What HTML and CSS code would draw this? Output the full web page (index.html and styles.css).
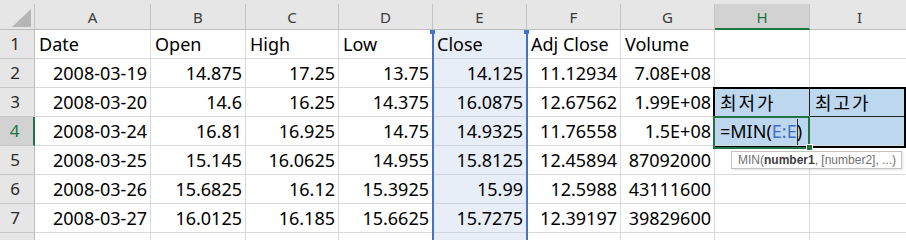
FILE: index.html
```html
<!DOCTYPE html>
<html lang="ko">
<head>
  <meta charset="UTF-8">
  <title>Sheet</title>
  <link rel="stylesheet" href="styles.css">
</head>
<body>
  <div class="wrap">
    <div class="strip"></div>
    <div class="sheet">
      <!-- column headers -->
      <div class="corner">
        <svg width="34" height="25" viewBox="0 0 34 25"><polygon points="31,5 31,23 12,23" fill="#b5b5b5"/></svg>
      </div>
      <div class="colhead">A</div>
      <div class="colhead">B</div>
      <div class="colhead">C</div>
      <div class="colhead">D</div>
      <div class="colhead">E</div>
      <div class="colhead">F</div>
      <div class="colhead">G</div>
      <div class="colhead active">H</div>
      <div class="colhead">I</div>

      <!-- row 1 -->
      <div class="rowhead">1</div>
      <div class="cell">Date</div>
      <div class="cell">Open</div>
      <div class="cell">High</div>
      <div class="cell">Low</div>
      <div class="cell ref">Close</div>
      <div class="cell">Adj Close</div>
      <div class="cell">Volume</div>
      <div class="cell"></div>
      <div class="cell"></div>

      <!-- row 2 -->
      <div class="rowhead">2</div>
      <div class="cell num">2008-03-19</div>
      <div class="cell num">14.875</div>
      <div class="cell num">17.25</div>
      <div class="cell num">13.75</div>
      <div class="cell num ref">14.125</div>
      <div class="cell num">11.12934</div>
      <div class="cell num">7.08E+08</div>
      <div class="cell"></div>
      <div class="cell"></div>

      <!-- row 3 -->
      <div class="rowhead">3</div>
      <div class="cell num">2008-03-20</div>
      <div class="cell num">14.6</div>
      <div class="cell num">16.25</div>
      <div class="cell num">14.375</div>
      <div class="cell num ref">16.0875</div>
      <div class="cell num">12.67562</div>
      <div class="cell num">1.99E+08</div>
      <div class="cell box box-tl ko">최저가</div>
      <div class="cell box box-tr ko">최고가</div>

      <!-- row 4 -->
      <div class="rowhead active">4</div>
      <div class="cell num">2008-03-24</div>
      <div class="cell num">16.81</div>
      <div class="cell num">16.925</div>
      <div class="cell num">14.75</div>
      <div class="cell num ref">14.9325</div>
      <div class="cell num">11.76558</div>
      <div class="cell num">1.5E+08</div>
      <div class="cell box editing">=MIN(<span class="refText">E:E</span><span class="caret"></span>)</div>
      <div class="cell box"></div>

      <!-- row 5 -->
      <div class="rowhead">5</div>
      <div class="cell num">2008-03-25</div>
      <div class="cell num">15.145</div>
      <div class="cell num">16.0625</div>
      <div class="cell num">14.955</div>
      <div class="cell num ref">15.8125</div>
      <div class="cell num">12.45894</div>
      <div class="cell num">87092000</div>
      <div class="cell"></div>
      <div class="cell"></div>

      <!-- row 6 -->
      <div class="rowhead">6</div>
      <div class="cell num">2008-03-26</div>
      <div class="cell num">15.6825</div>
      <div class="cell num">16.12</div>
      <div class="cell num">15.3925</div>
      <div class="cell num ref">15.99</div>
      <div class="cell num">12.5988</div>
      <div class="cell num">43111600</div>
      <div class="cell"></div>
      <div class="cell"></div>

      <!-- row 7 -->
      <div class="rowhead">7</div>
      <div class="cell num">2008-03-27</div>
      <div class="cell num">16.0125</div>
      <div class="cell num">16.185</div>
      <div class="cell num">15.6625</div>
      <div class="cell num ref">15.7275</div>
      <div class="cell num">12.39197</div>
      <div class="cell num">39829600</div>
      <div class="cell"></div>
      <div class="cell"></div>

      <!-- row 8, cut off by the window -->
      <div class="rowhead"></div>
      <div class="cell"></div>
      <div class="cell"></div>
      <div class="cell"></div>
      <div class="cell"></div>
      <div class="cell ref"></div>
      <div class="cell"></div>
      <div class="cell"></div>
      <div class="cell"></div>
      <div class="cell"></div>
    </div>

    <!-- overlays -->
    <div class="refBorder"></div>
    <div class="refHandle left"></div>
    <div class="refHandle right"></div>
    <div class="thickBox"></div>
    <div class="activeBox"></div>
    <div class="fillHandle"></div>
    <div class="tooltip">MIN(<b>number1</b>, [number2], ...)</div>
  </div>
</body>
</html>
```

FILE: styles.css
```css
body {
  margin: 0;
  background: #ffffff;
  font-family: "Noto Sans", "Noto Sans CJK KR", sans-serif;
  overflow: hidden;
}

.wrap {
  position: relative;
  width: 906px;
  height: 240px;
  overflow: hidden;
}

.strip {
  height: 4px;
  background: #e6e6e6;
}

.sheet {
  display: grid;
  grid-template-columns: 35px 116px 95px 93px 94px 94px 94px 94px 95px 100px;
  grid-template-rows: 26px repeat(8, 29px);
}

.corner,
.colhead,
.rowhead,
.cell {
  box-sizing: border-box;
  border-right: 1px solid #d9d9d9;
  border-bottom: 1px solid #d9d9d9;
}

.corner {
  background: #e6e6e6;
  border-right-color: #c4c4c4;
  border-bottom-color: #bdbdbd;
}

.corner svg {
  display: block;
}

.colhead {
  background: #e6e6e6;
  border-right-color: #c4c4c4;
  border-bottom-color: #bdbdbd;
  color: #3a3a3a;
  font-size: 15px;
  line-height: 25px;
  text-align: center;
  padding-top: 1px;
}

.colhead.active {
  background: #d2d2d2;
  color: #217346;
  border-bottom: 2px solid #217346;
}

.rowhead {
  background: #e6e6e6;
  border-right-color: #bdbdbd;
  border-bottom-color: #c8c8c8;
  color: #2a2a2a;
  font-size: 17px;
  line-height: 28px;
  text-align: center;
  padding-right: 4px;
}

.rowhead.active {
  background: #d2d2d2;
  color: #217346;
  border-right: 2px solid #217346;
}

.cell {
  font-size: 18px;
  line-height: 28px;
  color: #000;
  padding: 0 3px 0 4px;
  white-space: nowrap;
}

.cell.num {
  text-align: right;
}

.cell.ref {
  background: #e8eef8;
  border-bottom-color: #ccd4e0;
}

.cell.box {
  background: #bdd7ee;
}

.cell.box-tl {
  border-right-color: #222;
  border-bottom-color: #222;
}

.cell.box-tr {
  border-bottom-color: #222;
}

.cell.ko {
  font-family: "Noto Sans CJK KR", sans-serif;
  letter-spacing: 2px;
  padding-left: 5px;
}

.editing {
  padding-left: 5px;
}

.refText {
  color: #3f6fc6;
}

.caret {
  display: inline-block;
  width: 0;
  height: 26px;
  border-left: 1px solid #3a2a1a;
  vertical-align: -7px;
  margin-right: -1px;
}

/* E:E reference outline */
.refBorder {
  position: absolute;
  left: 432px;
  top: 30px;
  width: 92px;
  height: 220px;
  border-left: 2px solid #4472c4;
  border-right: 2px solid #4472c4;
}

.refHandle {
  position: absolute;
  top: 30px;
  width: 5px;
  height: 4px;
  background: #4472c4;
}

.refHandle.left {
  left: 430px;
}

.refHandle.right {
  left: 524px;
}

/* H3:I4 thick box */
.thickBox {
  position: absolute;
  left: 713px;
  top: 87px;
  width: 189px;
  height: 57px;
  border: 2px solid #000;
}

.activeBox {
  position: absolute;
  left: 713px;
  top: 116px;
  width: 93px;
  height: 29px;
  border: 2px solid #217346;
}

.fillHandle {
  position: absolute;
  left: 806px;
  top: 144px;
  width: 5px;
  height: 5px;
  background: #217346;
  border: 1px solid #fff;
}

.tooltip {
  position: absolute;
  left: 731px;
  top: 151px;
  width: 171px;
  height: 18px;
  box-sizing: border-box;
  background: #fff;
  border: 1px solid #c2c2c2;
  box-shadow: 1px 1px 2px rgba(0, 0, 0, 0.12);
  color: #707070;
  font-family: "Liberation Sans", sans-serif;
  font-size: 12px;
  line-height: 16px;
  padding-left: 6px;
  white-space: nowrap;
}

.tooltip b {
  color: #404040;
}
```
